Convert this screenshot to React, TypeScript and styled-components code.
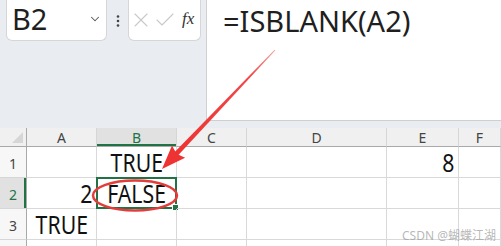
import React from "react";
import styled, { createGlobalStyle } from "styled-components";
import { ChevronDown, X, Check } from "lucide-react";

const GlobalStyle = createGlobalStyle`
  html, body {
    margin: 0;
    padding: 0;
  }
  body {
    background: #e9edf1;
    font-family: "Noto Sans", "Noto Sans CJK SC", sans-serif;
  }
`;

const Page = styled.div`
  position: relative;
  width: 501px;
  height: 246px;
  overflow: hidden;
  background: #e9edf1;
  display: flex;
  flex-direction: column;
`;

const TopBar = styled.div`
  display: flex;
  height: 121px;
  flex-shrink: 0;
`;

const LeftTools = styled.div`
  display: flex;
  align-items: flex-start;
  padding-left: 6px;
`;

const NameBox = styled.div`
  width: 101px;
  height: 41px;
  box-sizing: border-box;
  background: #fff;
  border: 1px solid #d6d6d6;
  border-top: none;
  border-radius: 0 0 6px 6px;
  display: flex;
  justify-content: space-between;
  padding: 0 4px 0 5px;
`;

const NameText = styled.span`
  font-size: 29px;
  line-height: 38px;
  color: #1f1f1f;
`;

const Chevron = styled.span`
  align-self: center;
  display: flex;
  color: #555;
  margin-top: -2px;
`;

const Dots = styled.div`
  width: 21px;
  height: 41px;
  display: flex;
  align-items: center;
  justify-content: center;
`;

const FxBox = styled.div`
  width: 73px;
  height: 41px;
  box-sizing: border-box;
  background: #fff;
  border: 1px solid #d6d6d6;
  border-top: none;
  border-radius: 0 0 6px 6px;
  display: flex;
  align-items: center;
  color: #c9c9c9;
`;

const FxLabel = styled.span`
  font-family: "Liberation Serif", serif;
  font-style: italic;
  font-size: 17px;
  color: #333;
  margin-left: 5px;
  margin-top: -2px;
`;

const FormulaBar = styled.div`
  flex: 1;
  margin-left: 5px;
  box-sizing: border-box;
  background: #fff;
  border-left: 1px solid #d0d0d0;
  border-bottom: 1px solid #cfcfcf;
  padding: 2px 0 0 16px;
  font-size: 29px;
  line-height: 38px;
  color: #1f1f1f;
`;

const Band = styled.div`
  height: 7px;
  flex-shrink: 0;
`;

const Grid = styled.div`
  flex: 1;
  display: grid;
  grid-template-columns: 27px 70px 80px 70px 140px 72px 1fr;
  grid-template-rows: 19px repeat(4, 31px);
  background: #fff;
`;

const Corner = styled.div`
  position: relative;
  background: #f0f0f0;
  border-right: 1px solid #a9a9a9;
  border-bottom: 1px solid #a9a9a9;
  box-sizing: border-box;

  &::after {
    content: "";
    position: absolute;
    right: 3px;
    bottom: 3px;
    border-left: 11px solid transparent;
    border-bottom: 11px solid #d6d6d6;
  }
`;

const ColHead = styled.div<{ $active?: boolean }>`
  box-sizing: border-box;
  background: ${(p) => (p.$active ? "#e1e1e1" : "#f0f0f0")};
  border-right: 1px solid #d6d6d6;
  border-bottom: 1px solid #a9a9a9;
  box-shadow: ${(p) => (p.$active ? "inset 0 -2px 0 #217346" : "none")};
  color: ${(p) => (p.$active ? "#217346" : "#444")};
  font-size: 14px;
  line-height: 16px;
  display: flex;
  align-items: center;
  justify-content: center;
  padding-top: 2px;
`;

const RowHead = styled.div<{ $active?: boolean }>`
  box-sizing: border-box;
  background: ${(p) => (p.$active ? "#e1e1e1" : "#f7f7f7")};
  border-right: 1px solid #a9a9a9;
  border-bottom: 1px solid #d6d6d6;
  box-shadow: ${(p) => (p.$active ? "inset -2px 0 0 #217346" : "none")};
  color: ${(p) => (p.$active ? "#217346" : "#444")};
  font-size: 14px;
  line-height: 16px;
  display: flex;
  align-items: center;
  justify-content: center;
  padding-top: 4px;
`;

const Cell = styled.div<{ $align: "left" | "center" | "right" }>`
  position: relative;
  box-sizing: border-box;
  border-right: 1px solid #d9d9d9;
  border-bottom: 1px solid #d9d9d9;
  display: flex;
  align-items: flex-end;
  justify-content: ${(p) =>
    p.$align === "left" ? "flex-start" : p.$align === "right" ? "flex-end" : "center"};
  padding: 0 4px 2px 4px;
  font-size: 25px;
  line-height: 25px;
  color: #111;
`;

const Value = styled.span<{ $align: "left" | "center" | "right" }>`
  display: inline-block;
  transform: scaleX(0.85);
  transform-origin: ${(p) => (p.$align === "right" ? "right" : p.$align === "left" ? "left" : "center")};
  white-space: nowrap;
`;

const Selection = styled.div`
  position: absolute;
  left: -1px;
  top: -1px;
  right: -1px;
  bottom: -1px;
  border: 2px solid #217346;
  pointer-events: none;

  &::after {
    content: "";
    position: absolute;
    right: -4px;
    bottom: -4px;
    width: 5px;
    height: 5px;
    background: #217346;
    border: 1px solid #fff;
  }
`;

const Overlay = styled.svg`
  position: absolute;
  left: 0;
  top: 0;
  pointer-events: none;
`;

const Watermark = styled.div`
  position: absolute;
  right: 5px;
  bottom: 2px;
  font-size: 12px;
  color: rgba(160, 160, 160, 0.75);
  font-family: "Noto Sans", "Noto Sans CJK SC", sans-serif;
`;

type Align = "left" | "center" | "right";
type CellData = { text?: string; align?: Align; selected?: boolean };

const columns = ["A", "B", "C", "D", "E", "F"];

const rows: CellData[][] = [
  [{}, { text: "TRUE", align: "center" }, {}, {}, { text: "8", align: "right" }, {}],
  [{ text: "2", align: "right" }, { text: "FALSE", align: "center", selected: true }, {}, {}, {}, {}],
  [{ text: "TRUE", align: "center" }, {}, {}, {}, {}, {}],
  [{}, {}, {}, {}, {}, {}],
];

const Arrow = () => {
  // shaft from the formula bar down to the tip near B1
  const start = { x: 275, y: 50 };
  const tip = { x: 162, y: 169 };
  const dx = tip.x - start.x;
  const dy = tip.y - start.y;
  const len = Math.hypot(dx, dy);
  const ux = dx / len;
  const uy = dy / len;
  const px = -uy;
  const py = ux;
  const headLen = 24;
  const base = { x: tip.x - ux * headLen, y: tip.y - uy * headLen };
  const pt = (x: number, y: number) => `${x.toFixed(1)},${y.toFixed(1)}`;
  const shaft = [
    pt(start.x + px * 0.5, start.y + py * 0.5),
    pt(base.x + ux * 4 + px * 2.4, base.y + uy * 4 + py * 2.4),
    pt(base.x + ux * 4 - px * 2.4, base.y + uy * 4 - py * 2.4),
    pt(start.x - px * 0.5, start.y - py * 0.5),
  ].join(" ");
  const head = [
    pt(tip.x, tip.y),
    pt(base.x + px * 9, base.y + py * 9),
    pt(base.x + ux * 3, base.y + uy * 3),
    pt(base.x - px * 9, base.y - py * 9),
  ].join(" ");
  return (
    <Overlay width="501" height="246" viewBox="0 0 501 246">
      <defs>
        <linearGradient id="shaftFade" gradientUnits="userSpaceOnUse" x1={start.x} y1={start.y} x2={base.x} y2={base.y}>
          <stop offset="0" stopColor="#f5a0a0" />
          <stop offset="0.25" stopColor="#f04848" />
          <stop offset="1" stopColor="#ee3333" />
        </linearGradient>
      </defs>
      <polygon points={shaft} fill="url(#shaftFade)" />
      <polygon points={head} fill="#ee3333" />
      <ellipse cx="135" cy="195.5" rx="42" ry="15" fill="none" stroke="#e43c3c" strokeWidth="2.5" />
    </Overlay>
  );
};

export default function App() {
  return (
    <Page>
      <GlobalStyle />
      <TopBar>
        <LeftTools>
          <NameBox>
            <NameText>B2</NameText>
            <Chevron>
              <ChevronDown size={14} strokeWidth={1.8} />
            </Chevron>
          </NameBox>
          <Dots>
            <svg width="4" height="12" viewBox="0 0 4 12">
              <circle cx="2" cy="1.5" r="1.3" fill="#444" />
              <circle cx="2" cy="6" r="1.3" fill="#444" />
              <circle cx="2" cy="10.5" r="1.3" fill="#444" />
            </svg>
          </Dots>
          <FxBox>
            <X size={24} strokeWidth={1.1} />
            <Check size={24} strokeWidth={1.1} />
            <FxLabel>fx</FxLabel>
          </FxBox>
        </LeftTools>
        <FormulaBar>=ISBLANK(A2)</FormulaBar>
      </TopBar>
      <Band />
      <Grid>
        <Corner />
        {columns.map((c) => (
          <ColHead key={c} $active={c === "B"}>
            {c}
          </ColHead>
        ))}
        {rows.map((row, r) => (
          <React.Fragment key={r}>
            <RowHead $active={r === 1}>{r < 3 ? r + 1 : ""}</RowHead>
            {row.map((cell, c) => {
              const align = cell.align ?? "left";
              return (
                <Cell key={c} $align={align}>
                  {cell.text && <Value $align={align}>{cell.text}</Value>}
                  {cell.selected && <Selection />}
                </Cell>
              );
            })}
          </React.Fragment>
        ))}
      </Grid>
      <Arrow />
      <Watermark>CSDN @蝴蝶江湖</Watermark>
    </Page>
  );
}
